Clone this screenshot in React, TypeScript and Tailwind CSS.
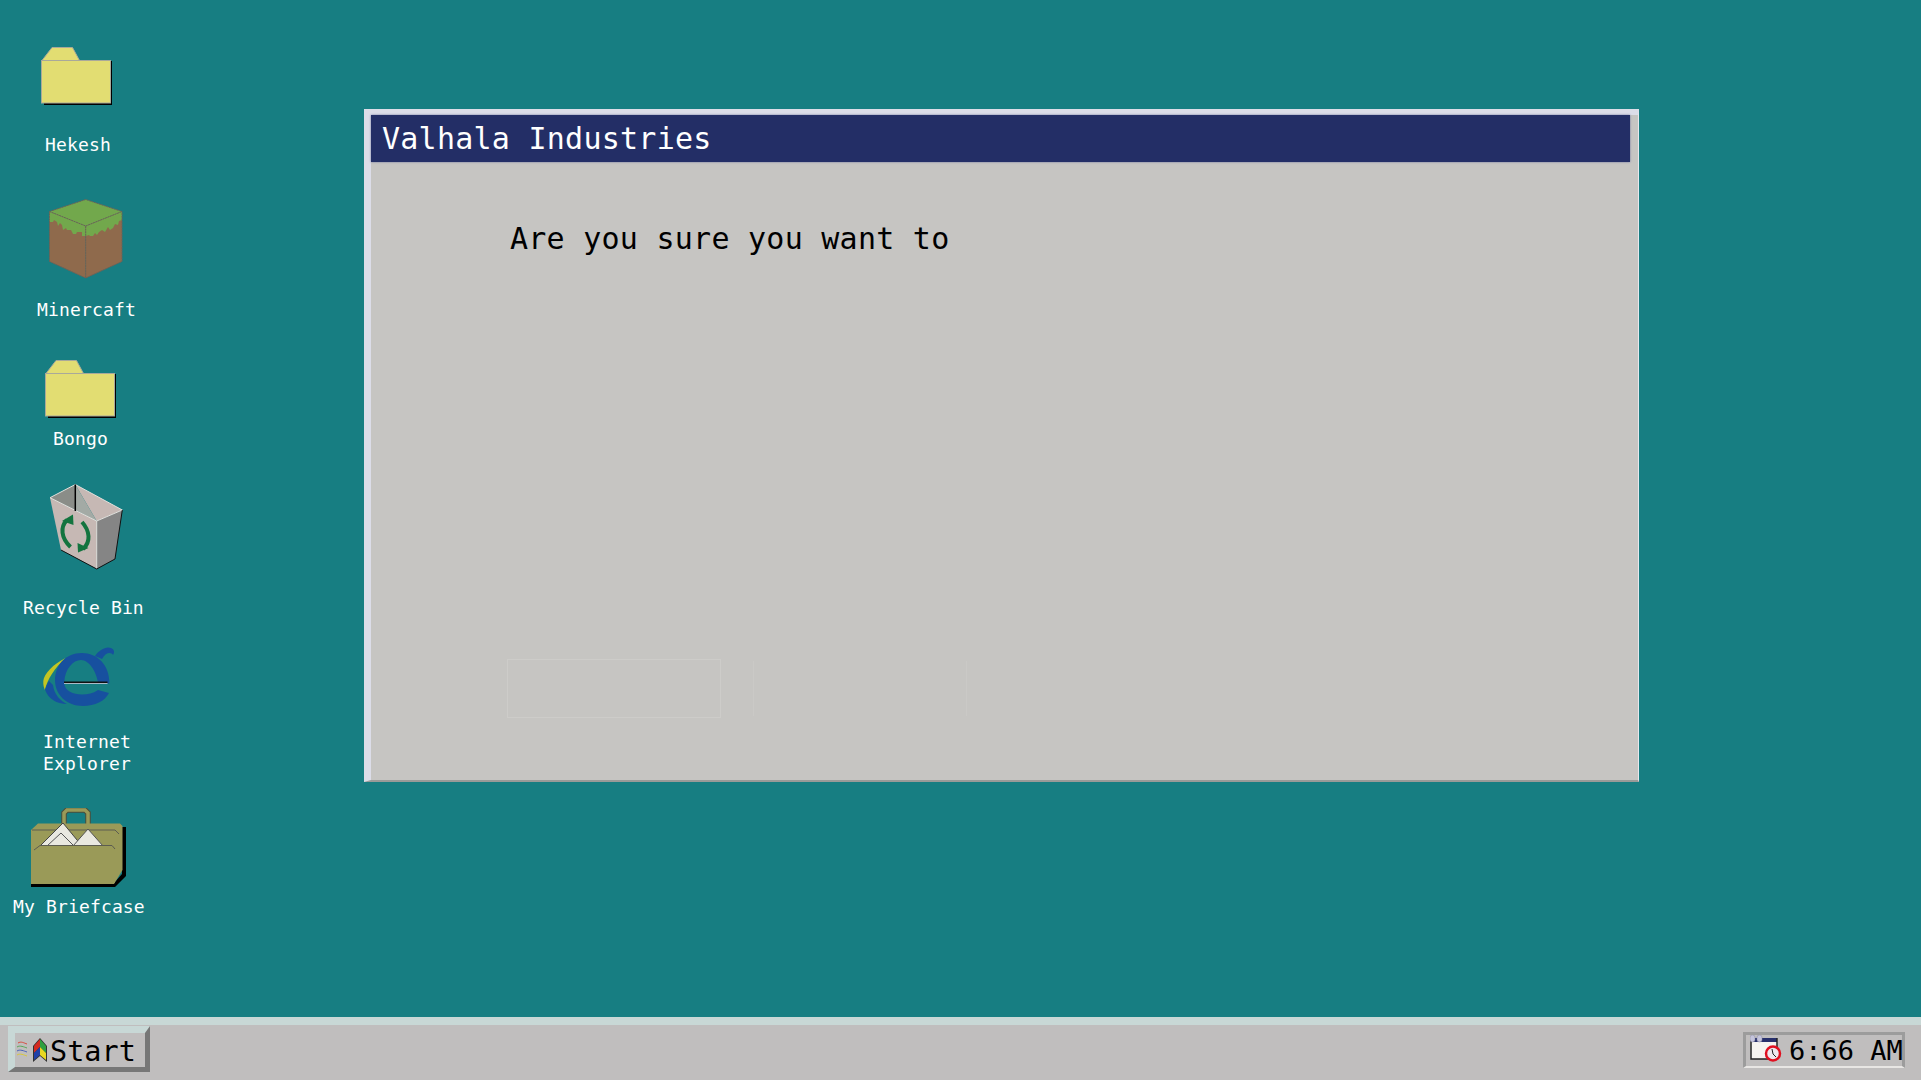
const mono = "font-['DejaVu_Sans_Mono','Liberation_Mono',monospace]";

function Folder() {
  return (
    <svg width="72" height="59" viewBox="0 0 72 59" className="block">
      <polygon points="1,13.5 11,0.5 31.5,0.5 38.5,13.5" fill="#e2dd72" stroke="#a9a99a" strokeWidth="1" />
      <rect x="3" y="14" width="68" height="44" fill="#000" />
      <rect x="0.5" y="13.5" width="69" height="42.5" fill="#e2dd72" stroke="#a9a99a" strokeWidth="1" />
    </svg>
  );
}

function MinecraftIcon() {
  return (
    <svg width="74" height="81" viewBox="0 0 74 81" className="block">
      <polygon points="0.5,12.5 36.7,27 36.7,79 0.5,62.5" fill="#8f6a4c" />
      <polygon points="36.7,27 73,12.5 73,62.5 36.7,79" fill="#8f6a4c" />
      <polygon points="0.5,12.5 36.7,0.5 73,12.5 36.7,27" fill="#72a84c" />
      <polygon points="0.5,12.5 36.7,27 36.7,37 33,37 33,33 28,33 27,35 24,35 22,31 18,31 17,29 14,31 13,26 11,24 9,27 8,23 5,21 4,23 0.5,23" fill="#72a84c" />
      <polygon points="36.7,27 73,12.5 73,21 70,22 69,26 66,25 64,29 61,31 59,28 56,33 53,31 50,33 48,36 46,34 44,37 41,37 40,36 36.7,37" fill="#72a84c" />
      <path d="M0.5 12.5 L36.7 0.5 L73 12.5 L73 62.5 L36.7 79 L0.5 62.5 Z M0.5 12.5 L36.7 27 L73 12.5 M36.7 27 L36.7 79" fill="none" stroke="#6b6258" strokeWidth="1" strokeDasharray="2 0.6" />
    </svg>
  );
}

function RecycleIcon() {
  return (
    <svg width="75" height="86" viewBox="0 0 75 86" className="block">
      <polygon points="26.3,0.5 1,13.7 26.3,26" fill="#8a8d88" />
      <polygon points="26.3,0.5 73.3,26 47.7,37" fill="#c6b8b4" />
      <polygon points="26.3,0.5 47.7,37 26.3,26" fill="#a3aaa5" />
      <polygon points="1,13.7 47.7,37 47.7,84.7 12,66" fill="#c6b8b4" />
      <polygon points="47.7,37 73.3,26 66,75 47.7,84.7" fill="#858585" />
      <path d="M1 13.7 L47.7 37 L73.3 26 M26.3 0.5 L73.3 26 M26.3 0.5 L1 13.7 M47.7 37 L47.7 84.7" fill="none" stroke="#e4e0dc" strokeWidth="1" />
      <path d="M26.3 0.5 L26.3 27" stroke="#000" strokeWidth="1.5" />
      <path d="M12 66 L47.7 85 L66 75 L73.3 26" fill="none" stroke="#111" strokeWidth="1" />
      <path d="M21.5 63 C12 54 11 43 18 36" fill="none" stroke="#13743f" strokeWidth="4" />
      <polygon points="13,37 24,30.5 24.5,41" fill="#13743f" />
      <path d="M33 38 C41 47 42 58 34 65" fill="none" stroke="#13743f" strokeWidth="4" />
      <polygon points="39.5,64 29,68.5 28.5,59" fill="#13743f" />
    </svg>
  );
}

function IEIcon() {
  return (
    <svg width="72" height="60" viewBox="0 0 72 60" className="block">
      <path d="M22.7 11 C10 17 1 27 0.3 34 C0 38 1 41 2 43 C4 33 12 20 22.7 11 Z" fill="#c3c522" />
      <path d="M2 42.5 C5 52 14 57 24 57 C18 54 11 48 10 38 L6 34 C4 37 3 40 2 42.5 Z" fill="#17509f" />
      <path d="M52 9 C56 3 63 -1 68 1 C71 2 72 5 70 8 C68 5 63 5 59 12 Z" fill="#17509f" />
      <path
        fillRule="evenodd"
        d="M66.3 36.5 C67 18 54 6 39 6 C22 6 12 19 12 33 C12 48 24 59 40 59 C52 59 62 54 66 46 L55 43 C50 46.5 45 47.5 39 47.5 C30 47.5 22 44 21.3 36.5 Z M21.3 35 C22 22 30 13 38 13 C46 13 53 24 55 35 Z"
        fill="#17509f"
      />
      <rect x="21" y="34.5" width="43.5" height="1.5" fill="#111" />
      <rect x="21" y="36" width="43.5" height="0.8" fill="#cfd3d6" />
    </svg>
  );
}

function BriefcaseIcon() {
  return (
    <svg width="97" height="81" viewBox="0 0 97 81" className="block">
      <path d="M34 16 L34 5 L37 2 L55 2 L58 5 L58 16" fill="none" stroke="#4d4d3a" strokeWidth="5.5" />
      <path d="M34 16 L34 5 L37 2 L55 2 L58 5 L58 16" fill="none" stroke="#9a9a58" strokeWidth="3.5" />
      <polygon points="92,19 96,19 96,68 85,79 1,79 1,75 84,75 92,66" fill="#000" />
      <polygon points="8,15.5 90,15.5 92.5,18 92.5,62 84,76 1,76 1,22" fill="#9a9a58" />
      <path d="M2 22 L85 22 L89 26" fill="none" stroke="#5c5c50" strokeWidth="1" />
      <polygon points="10,38 33,15 52,38" fill="#e9e8e0" stroke="#444" strokeWidth="1" />
      <polygon points="17,38 31,25 44,38" fill="#e9e8e0" stroke="#555" strokeWidth="1" />
      <polygon points="43,38 58,21 73,38" fill="#e9e8e0" stroke="#555" strokeWidth="1" />
      <polygon points="4,42 10,37.5 82,37.5 85,42 85,75 1,76 1,42" fill="#9a9a58" />
      <path d="M4 42 L10 37.5 L82 37.5 L85 41" fill="none" stroke="#5c5c50" strokeWidth="1" />
    </svg>
  );
}

function StartLogo() {
  return (
    <svg width="32" height="25" viewBox="0 0 32 25" className="block shrink-0">
      <path d="M2 5 C5 3 8 5 11 6" fill="none" stroke="#d84a3c" strokeWidth="1" />
      <path d="M1 9 C4 7 8 9 11 10" fill="none" stroke="#58a858" strokeWidth="1" />
      <path d="M1 13 C4 11 8 13 11 14" fill="none" stroke="#4a62b8" strokeWidth="1" />
      <path d="M1 17 C4 15 8 17 11 18" fill="none" stroke="#d8c83c" strokeWidth="1" />
      <polygon points="24,0 31,8 31,24 24,18 17,24 17,8" fill="#333" />
      <polygon points="24,1 18,8 18,15 24,9" fill="#d42a20" />
      <polygon points="24,1 30,8 30,15 24,9" fill="#30a040" />
      <polygon points="24,9 18,15 18,22 24,17" fill="#2040a8" />
      <polygon points="24,9 30,15 30,22 24,17" fill="#e8d820" />
    </svg>
  );
}

function ClockIcon() {
  return (
    <svg width="33" height="27" viewBox="0 0 33 27" className="block shrink-0">
      <rect x="0.5" y="3" width="27" height="21" fill="#f6f4f0" />
      <rect x="3" y="3" width="24" height="4" fill="#28306c" />
      <path d="M1 4 L1 24 L20 24 M27 3 L27 14" fill="none" stroke="#222" strokeWidth="1.5" />
      <rect x="0" y="0" width="5" height="7" rx="2.5" fill="#c4c4dc" stroke="#8a8aa0" strokeWidth="0.5" />
      <rect x="7" y="0" width="5" height="7" rx="2.5" fill="#c4c4dc" stroke="#8a8aa0" strokeWidth="0.5" />
      <circle cx="23" cy="18.5" r="7" fill="#eee8ee" stroke="#e01020" strokeWidth="2.5" />
      <path d="M22 14 L23 19 L26 22" fill="none" stroke="#222" strokeWidth="1" />
    </svg>
  );
}

function Label({ children, className }: { children: React.ReactNode; className: string }) {
  return <span className={`block whitespace-pre text-center text-[18px] leading-[22px] tracking-[0.15px] text-white ${mono} ${className}`}>{children}</span>;
}

export default function App() {
  return (
    <div className="flex h-screen w-full flex-col overflow-hidden bg-[#177e82]">
      <main className="relative flex-1">
        <div className="absolute left-[41px] top-[47px]">
          <Folder />
          <Label className="ml-[2px] mt-[28px]">Hekesh</Label>
        </div>
        <div className="absolute left-[49px] top-[199px]">
          <MinecraftIcon />
          <Label className="-ml-[12px] mt-[19px]">Minercaft</Label>
        </div>
        <div className="absolute left-[45px] top-[360px]">
          <Folder />
          <Label className="-ml-[1px] mt-[9px]">Bongo</Label>
        </div>
        <div className="absolute left-[49px] top-[484px]">
          <RecycleIcon />
          <Label className="-ml-[26px] mt-[27px]">Recycle Bin</Label>
        </div>
        <div className="absolute left-[43px] top-[647px]">
          <IEIcon />
          <Label className="mt-[24px]">{"Internet\nExplorer"}</Label>
        </div>
        <div className="absolute left-[30px] top-[808px]">
          <BriefcaseIcon />
          <Label className="-ml-[17px] mt-[7px]">My Briefcase</Label>
        </div>

        <section className="absolute left-[364px] top-[109px] flex h-[673px] w-[1275px] flex-col border-b-2 border-l-[7px] border-r-[1px] border-t-[6px] border-b-[#9a9a98] border-l-[#dcdde8] border-r-[#e8e8ee] border-t-[#dcdde8] bg-[#c6c5c2]">
          <header className={`mr-[8px] flex h-[47px] items-center bg-[#232e66] pl-[11px] text-[30px] tracking-[0.25px] text-white shadow-[0_0_2px_#6d74a0] ${mono}`}>
            Valhala Industries
          </header>
          <p className={`ml-[139px] mt-[59px] text-[30px] leading-[36px] tracking-[0.25px] text-black ${mono}`}>Are you sure you want to</p>
          <div className="ml-[136px] mt-[402px] flex items-center gap-[32px]">
            <div className="h-[59px] w-[214px] border border-[#cdccc9]" />
            <div className="h-[55px] w-[214px] border-x border-[#cac9c6]" />
          </div>
        </section>
      </main>

      <footer className="flex h-[63px] shrink-0 items-start justify-between border-t-[8px] border-[#c8d8d6] bg-[#c0bebe] pl-[8px] pr-[16px]">
        <button className={`mt-[1px] flex h-[46px] w-[142px] items-center border-b-[5px] border-l-[7px] border-r-[5px] border-t-[7px] border-b-[#777777] border-l-[#c8d8d6] border-r-[#777777] border-t-[#c8d8d6] pl-[1px] text-[28.5px] leading-none text-black ${mono}`}>
          <StartLogo />
          <span className="ml-[2px] mt-[4px]">Start</span>
        </button>
        <div className={`mt-[7px] flex h-[36px] w-[162px] items-start gap-[6px] border-x-[3px] border-b-2 border-t-[3px] border-x-[#9c9c9c] border-b-[#e8e6e4] border-t-[#9c9c9c] pl-[4px] text-[27px] leading-none text-black ${mono}`}>
          <ClockIcon />
          <span className="mt-[2px] whitespace-pre">6:66 AM</span>
        </div>
      </footer>
    </div>
  );
}
